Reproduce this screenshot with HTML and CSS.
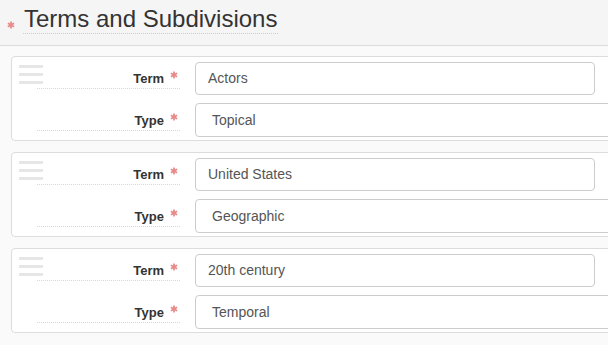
FILE: index.html
```html
<!DOCTYPE html>
<html>
<head>
<meta charset="utf-8">
<link rel="stylesheet" href="styles.css">
</head>
<body>
<div class="header">
  <svg class="req req-title" viewBox="0 0 10 10"><path d="M5 0.5V9.5M1.1 2.75L8.9 7.25M1.1 7.25L8.9 2.75"/></svg>
  <h1 class="title">Terms and Subdivisions</h1>
</div>
<div class="list">
  <div class="card">
    <div class="handle"><span></span><span></span><span></span></div>
    <div class="row">
      <div class="label">Term<svg class="req" viewBox="0 0 10 10"><path d="M5 0.5V9.5M1.1 2.75L8.9 7.25M1.1 7.25L8.9 2.75"/></svg></div>
      <div class="input">Actors</div>
    </div>
    <div class="row">
      <div class="label label-select">Type<svg class="req" viewBox="0 0 10 10"><path d="M5 0.5V9.5M1.1 2.75L8.9 7.25M1.1 7.25L8.9 2.75"/></svg></div>
      <div class="select">Topical</div>
    </div>
  </div>
  <div class="card">
    <div class="handle"><span></span><span></span><span></span></div>
    <div class="row">
      <div class="label">Term<svg class="req" viewBox="0 0 10 10"><path d="M5 0.5V9.5M1.1 2.75L8.9 7.25M1.1 7.25L8.9 2.75"/></svg></div>
      <div class="input">United States</div>
    </div>
    <div class="row">
      <div class="label label-select">Type<svg class="req" viewBox="0 0 10 10"><path d="M5 0.5V9.5M1.1 2.75L8.9 7.25M1.1 7.25L8.9 2.75"/></svg></div>
      <div class="select">Geographic</div>
    </div>
  </div>
  <div class="card">
    <div class="handle"><span></span><span></span><span></span></div>
    <div class="row">
      <div class="label">Term<svg class="req" viewBox="0 0 10 10"><path d="M5 0.5V9.5M1.1 2.75L8.9 7.25M1.1 7.25L8.9 2.75"/></svg></div>
      <div class="input">20th century</div>
    </div>
    <div class="row">
      <div class="label label-select">Type<svg class="req" viewBox="0 0 10 10"><path d="M5 0.5V9.5M1.1 2.75L8.9 7.25M1.1 7.25L8.9 2.75"/></svg></div>
      <div class="select">Temporal</div>
    </div>
  </div>
</div>
</body>
</html>
```
FILE: styles.css
```css
html, body {
  margin: 0;
  padding: 0;
}
body {
  background: #fafafa;
  font-family: "Liberation Sans", Arial, sans-serif;
  color: #333;
  overflow: hidden;
  width: 608px;
}
.header {
  height: 46px;
  box-sizing: border-box;
  background: #f5f5f5;
  border-bottom: 1px solid #dcdcdc;
  display: flex;
  align-items: flex-start;
  padding: 5px 0 0 7px;
}
.req {
  width: 8px;
  height: 8px;
  flex: none;
  stroke: #e88a8a;
  stroke-width: 2.2;
  fill: none;
}
.req-title {
  margin-top: 16px;
  margin-right: 8px;
}
.title {
  margin: 0;
  font-size: 24px;
  font-weight: normal;
  line-height: 28px;
  color: #333;
  border-bottom: 1px dotted #cfcfcf;
  padding: 0 1px;
}
.list {
  display: flex;
  flex-direction: column;
  gap: 11px;
  padding: 10px 0 0 11px;
}
.card {
  position: relative;
  width: 720px;
  flex: none;
  background: #fff;
  border: 1px solid #ddd;
  border-radius: 4px;
  padding: 5px 0 3px 25px;
  display: flex;
  flex-direction: column;
  gap: 8px;
}
.handle {
  position: absolute;
  left: 7px;
  top: 8px;
  display: flex;
  flex-direction: column;
  gap: 5px;
}
.handle span {
  display: block;
  width: 24px;
  height: 3px;
  background: #e6e6e6;
}
.row {
  display: flex;
  align-items: flex-start;
}
.label {
  width: 143px;
  box-sizing: border-box;
  margin-top: 7px;
  line-height: 19px;
  font-size: 13px;
  font-weight: bold;
  color: #333;
  border-bottom: 1px dotted #d8d8d8;
  display: flex;
  justify-content: flex-end;
  align-items: flex-start;
  gap: 6px;
  padding-right: 2px;
}
.label .req {
  margin-top: 2px;
}
.label-select {
  margin-top: 8px;
}
.input, .select {
  margin-left: 15px;
  box-sizing: border-box;
  border: 1px solid #ccc;
  border-radius: 4px;
  background: #fff;
  font-size: 14px;
  color: #555;
}
.input {
  width: 400px;
  height: 33px;
  line-height: 31px;
  padding-left: 12px;
}
.select {
  width: 500px;
  height: 34px;
  line-height: 32px;
  padding-left: 16px;
}
```
